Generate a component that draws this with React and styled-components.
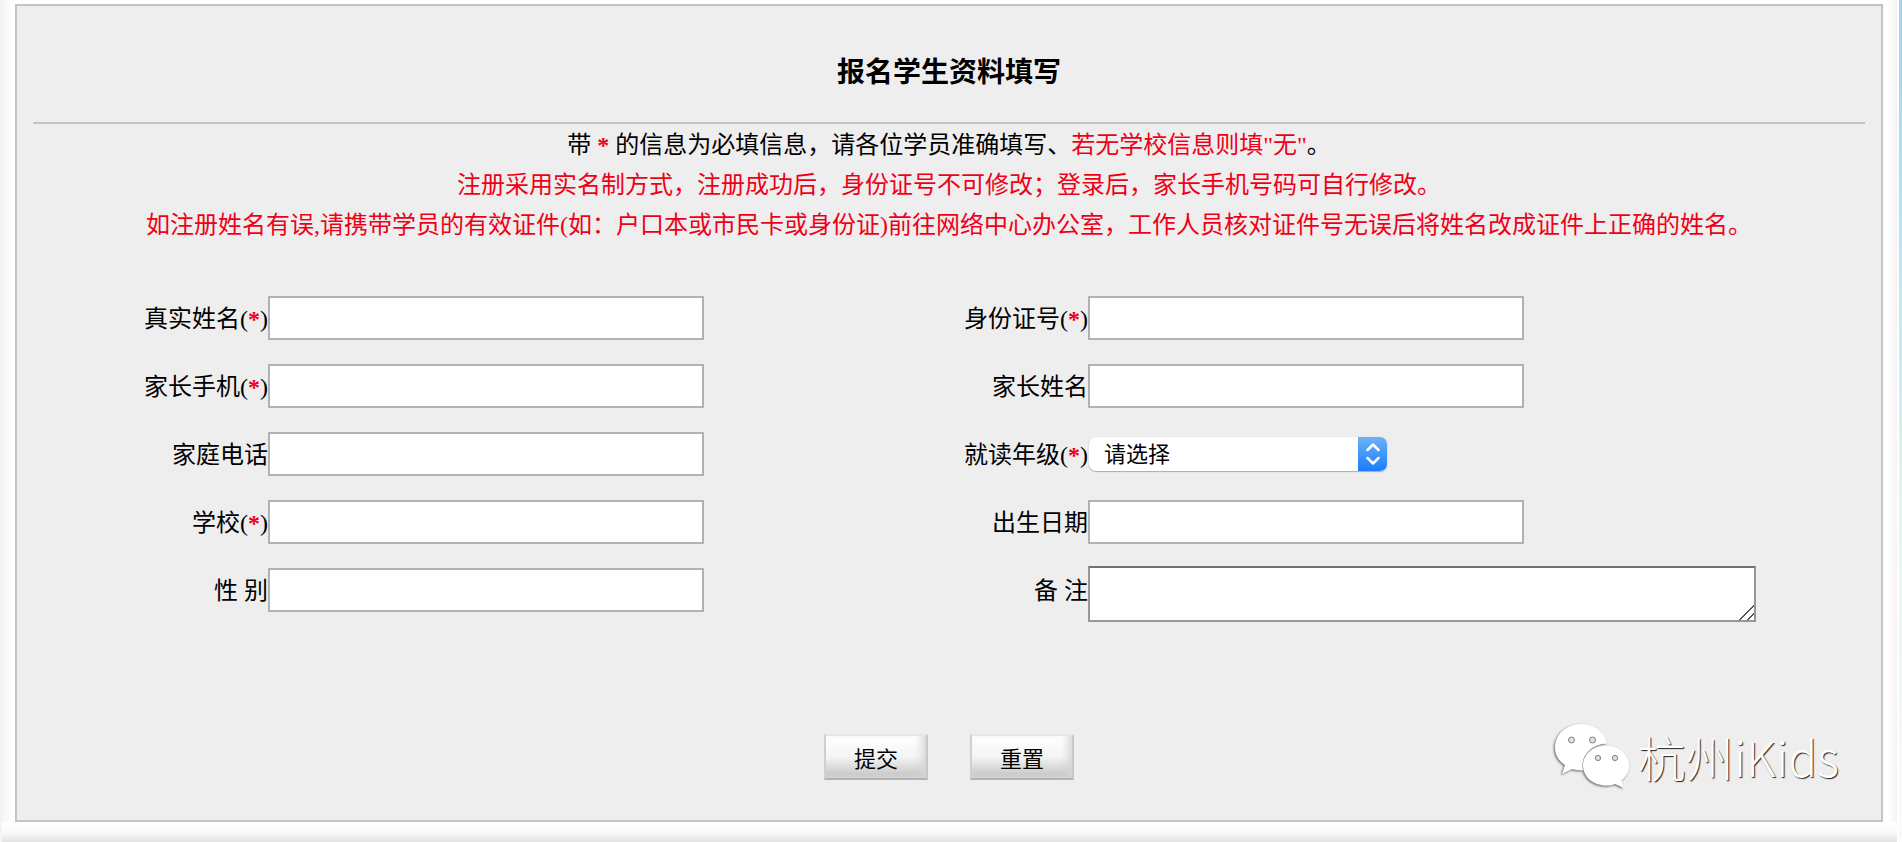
import React, { useState } from "react";
import styled, { createGlobalStyle } from "styled-components";

const GlobalStyle = createGlobalStyle`
  * {
    box-sizing: border-box;
  }
  body {
    margin: 0;
    background-color: #fff;
    font-family: "Liberation Serif", "Noto Sans CJK SC", serif;
    font-size: 24px;
    color: #000;
  }
`;

const Page = styled.div`
  display: flex;
  flex-direction: column;
  min-height: 100vh;
  padding: 4px 19px 0 15px;
  background:
    linear-gradient(#9fd6e8, #b5e2ee 25%, #e6f4ee 60%, #fbfcf8) right / 3px 100% no-repeat,
    linear-gradient(to right, #f3f3f3, #fff 12px, #fff calc(100% - 14px), #f5f2f4 calc(100% - 5px), #fff calc(100% - 5px));
`;

const Panel = styled.main`
  position: relative;
  padding: 0 16px 40px;
  border: 2px solid #c3c3c3;
  background-color: #eee;
`;

const Title = styled.h1`
  height: 118px;
  margin: 0;
  padding-top: 47px;
  border-bottom: 2px solid #c3c3c3;
  font-size: 28px;
  line-height: 40px;
  font-weight: bold;
  text-align: center;
`;

const Notices = styled.div`
  padding-top: 1px;
`;

const Notice = styled.p`
  margin: 0;
  line-height: 40px;
  text-align: center;
  color: ${(props) => (props.$red ? "#f00018" : "#000")};
`;

const Red = styled.span`
  color: #f00018;
`;

const Star = styled(Red)`
  font-weight: bold;
`;

const Fields = styled.div`
  display: grid;
  grid-template-columns: 235fr 585fr 235fr 777fr;
  grid-auto-rows: 68px;
  align-items: center;
  margin-top: 39px;
`;

const Label = styled.label`
  padding-top: 2px;
  line-height: 40px;
  text-align: right;
  white-space: nowrap;
`;

const Input = styled.input`
  width: 436px;
  max-width: 100%;
  height: 44px;
  padding: 0 8px;
  border: 2px solid #b2b2b2;
  border-radius: 0;
  background-color: #fff;
  font-size: 22px;
`;

const SelectBox = styled.div`
  display: flex;
  width: 298px;
  height: 34px;
  margin-left: 1px;
  border-radius: 7px;
  background-color: #fff;
  box-shadow: 0 0 1px #bbb, 0 1px 1px #aaa;
  overflow: hidden;
`;

const Select = styled.select`
  flex: 1;
  padding: 0 15px;
  border: none;
  appearance: none;
  background: transparent;
  font-family: "Liberation Sans", "Noto Sans CJK SC", sans-serif;
  font-size: 22px;
  color: #000;
`;

const Arrows = styled.span`
  display: flex;
  align-items: center;
  justify-content: center;
  width: 29px;
  background: linear-gradient(#6bb2f8, #1a7dfc);
`;

const Textarea = styled.textarea`
  width: 86%;
  height: 56px;
  margin-top: 8px;
  padding: 4px;
  border: 2px solid #979797;
  border-top-color: #707070;
  border-radius: 0;
  background-color: #fff;
  font-size: 22px;
  resize: both;

  &::-webkit-resizer {
    background: linear-gradient(
      135deg,
      transparent 48%,
      #555 48%,
      #555 56%,
      transparent 56%,
      transparent 74%,
      #555 74%,
      #555 82%,
      transparent 82%
    );
  }
`;

const Buttons = styled.div`
  display: flex;
  justify-content: center;
  gap: 42px;
  margin-top: 110px;
`;

const Button = styled.button`
  width: 104px;
  height: 46px;
  padding: 0;
  border: 2px solid;
  border-color: #e6e6e6 #c8c8c8 #b4b4b4 #cfcfcf;
  background: linear-gradient(#fff, #f4f4f4 50%, #cbcbcb 90%, #d2d2d2);
  box-shadow: inset -8px 0 8px -4px #d6d6d6;
  font-family: "Liberation Sans", "Noto Sans CJK SC", sans-serif;
  font-size: 22px;
  color: #000;
`;

/* floats over the bottom right corner of the panel */
const Watermark = styled.div`
  position: absolute;
  right: 42px;
  bottom: 30px;
  display: flex;
  align-items: center;
  gap: 8px;
  color: #fff;
  font-family: "Noto Sans CJK SC", sans-serif;
  font-size: 48px;
  font-weight: 300;
  line-height: 68px;
  text-shadow: 1px 1px 1px #222;
`;

const Bubbles = styled.svg`
  filter: drop-shadow(-1px 1px 1px #666);
`;

const Footer = styled.div`
  flex: 1;
  min-height: 20px;
  margin: 0 -14px 0 -13px;
  background: linear-gradient(#fff, #fafafa 50%, #e4e4e4);
`;

const rows = [
  [
    { id: "realName", text: "真实姓名", required: true },
    { id: "idCard", text: "身份证号", required: true },
  ],
  [
    { id: "parentMobile", text: "家长手机", required: true },
    { id: "parentName", text: "家长姓名" },
  ],
  [
    { id: "homePhone", text: "家庭电话" },
    { id: "grade", text: "就读年级", required: true, type: "select" },
  ],
  [
    { id: "school", text: "学校", required: true },
    { id: "birthday", text: "出生日期" },
  ],
  [
    { id: "gender", text: "性 别" },
    { id: "remark", text: "备 注", type: "textarea" },
  ],
];

const Field = ({ field, value, onChange }) => {
  const common = { id: field.id, name: field.id, value, onChange };

  if (field.type === "select") {
    return (
      <SelectBox>
        <Select {...common}>
          <option value="">请选择</option>
        </Select>
        <Arrows>
          <svg width="16" height="22" viewBox="0 0 16 22" fill="none" stroke="#fff" strokeWidth="2.500" strokeLinecap="round" strokeLinejoin="round">
            <path d="M2.500 7 8 1.500 13.500 7M2.500 15 8 20.500l5.500-5.500" />
          </svg>
        </Arrows>
      </SelectBox>
    );
  }
  if (field.type === "textarea") {
    return <Textarea {...common} />;
  }
  return <Input type="text" {...common} />;
};

const App = () => {
  const [values, setValues] = useState({});

  const handleChange = (e) => {
    setValues({ ...values, [e.target.name]: e.target.value });
  };

  return (
    <Page>
      <GlobalStyle />
      <Panel>
        <Title>报名学生资料填写</Title>
        <Notices>
          <Notice>
            带 <Star>*</Star> 的信息为必填信息，请各位学员准确填写、<Red>若无学校信息则填"无"</Red>。
          </Notice>
          <Notice $red>注册采用实名制方式，注册成功后，身份证号不可修改；登录后，家长手机号码可自行修改。</Notice>
          <Notice $red>
            如注册姓名有误,请携带学员的有效证件(如：户口本或市民卡或身份证)前往网络中心办公室，工作人员核对证件号无误后将姓名改成证件上正确的姓名。
          </Notice>
        </Notices>
        <form onSubmit={(e) => e.preventDefault()} onReset={() => setValues({})}>
          <Fields>
            {rows.flat().map((field) => (
              <React.Fragment key={field.id}>
                <Label htmlFor={field.id}>
                  {field.text}
                  {field.required && (
                    <>
                      (<Star>*</Star>)
                    </>
                  )}
                </Label>
                <Field field={field} value={values[field.id] || ""} onChange={handleChange} />
              </React.Fragment>
            ))}
          </Fields>
          <Buttons>
            <Button type="submit">提交</Button>
            <Button type="reset">重置</Button>
          </Buttons>
        </form>
        <Watermark>
          <Bubbles width="76" height="66" viewBox="0 0 76 66" aria-hidden="true">
            <path
              fill="#fff"
              d="M27.500 1C12.500 1 1 11 1 24.500c0 8 4 13.500 10 17.500L8 51l10-5c4 1.200 7 1.500 11 1.200C26 33 37 21 53 20.500 50.500 9 40.500 1 27.500 1Z"
            />
            <path
              fill="#fff"
              d="M52 22.500c-13 0-23 9-23 20s10 20 23 20c3.500 0 6-.4 9-1.500l9 4-2.500-7.500c5-4 7.500-9 7.500-15 0-11-10-20-23-20Z"
            />
            <g fill="#e0e0e0" stroke="#808080" strokeWidth="1">
              <circle cx="17.500" cy="17" r="3" />
              <circle cx="38.500" cy="17" r="3" />
              <circle cx="44" cy="35" r="2.600" />
              <circle cx="61" cy="35" r="2.600" />
            </g>
          </Bubbles>
          <span>杭州iKids</span>
        </Watermark>
      </Panel>
      <Footer />
    </Page>
  );
};

export default App;
